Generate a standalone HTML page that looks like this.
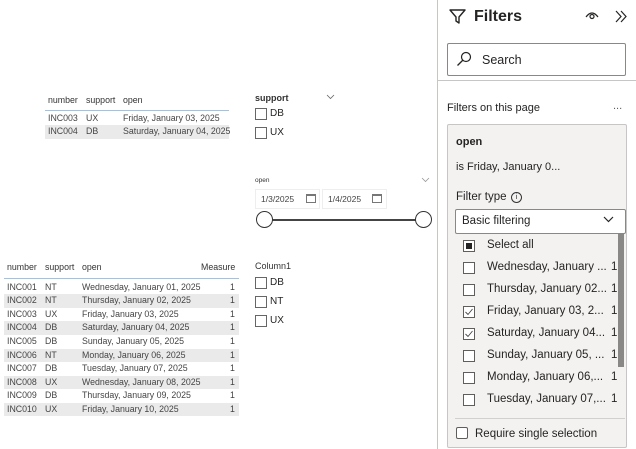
<!DOCTYPE html>
<html><head><style>
body{margin:0;width:636px;height:449px;overflow:hidden;background:#fff;font-family:"Segoe UI","Liberation Sans",sans-serif;color:#252423;position:relative}
.a{position:absolute;white-space:nowrap}
.t{font-size:9px;color:#333}
.cb{position:absolute;width:10px;height:10px;border:1px solid #666;background:#fff}
.cb2{position:absolute;width:10px;height:10px;border:1px solid #605e5c;background:#fff}
.row{position:absolute;height:13.6px;font-size:8.8px;color:#444;line-height:13.6px}
.g{background:#eaeaea}
</style></head><body>
<!-- table 1 -->
<div class="a t" style="left:48px;top:95px;font-size:8.8px">number</div>
<div class="a t" style="left:86px;top:95px;font-size:8.8px">support</div>
<div class="a t" style="left:123px;top:95px;font-size:8.8px">open</div>
<div class="a" style="left:45px;top:110px;width:184px;height:1px;background:#9cc3ec"></div>
<div class="row" style="left:45px;top:112px;width:184px"><span class="a" style="left:3px">INC003</span><span class="a" style="left:41px">UX</span><span class="a" style="left:78px">Friday, January 03, 2025</span></div>
<div class="row g" style="left:45px;top:125px;width:184px"><span class="a" style="left:3px">INC004</span><span class="a" style="left:41px">DB</span><span class="a" style="left:78px">Saturday, January 04, 2025</span></div>
<!-- support slicer -->
<div class="a" style="left:255px;top:93px;font-size:9px;font-weight:bold;color:#333">support</div>
<svg class="a" style="left:326px;top:94px" width="9" height="6"><path d="M1 1 L4.5 4.5 L8 1" fill="none" stroke="#666" stroke-width="0.8"/></svg>
<div class="cb" style="left:255px;top:108px"></div><div class="a" style="left:270px;top:108px;font-size:10px">DB</div>
<div class="cb" style="left:255px;top:127px"></div><div class="a" style="left:270px;top:127px;font-size:10px">UX</div>
<!-- open slicer -->
<div class="a" style="left:255px;top:177px;font-size:6.5px;color:#333">open</div>
<svg class="a" style="left:421px;top:177px" width="9" height="6"><path d="M1 1 L4.5 4.5 L8 1" fill="none" stroke="#999" stroke-width="0.8"/></svg>
<div class="a" style="left:255px;top:189px;width:63px;height:18px;border:1px solid #eee;font-size:8.5px;line-height:18px;color:#444"><span style="margin-left:5px">1/3/2025</span></div>
<div class="a" style="left:322px;top:189px;width:63px;height:18px;border:1px solid #eee;font-size:8.5px;line-height:18px;color:#444"><span style="margin-left:5px">1/4/2025</span></div>
<div class="a" style="left:306px;top:194px;width:8px;height:6px;border:1px solid #777;border-top-width:2px"></div>
<div class="a" style="left:372px;top:194px;width:8px;height:6px;border:1px solid #777;border-top-width:2px"></div>
<div class="a" style="left:264px;top:219px;width:160px;height:2px;background:#444"></div>
<div class="a" style="left:256px;top:211px;width:15px;height:15px;border:1.3px solid #333;border-radius:50%;background:#fff"></div>
<div class="a" style="left:415px;top:211px;width:15px;height:15px;border:1.3px solid #333;border-radius:50%;background:#fff"></div>
<!-- table 2 -->
<div class="a t" style="left:7px;top:262px;font-size:8.8px">number</div>
<div class="a t" style="left:45px;top:262px;font-size:8.8px">support</div>
<div class="a t" style="left:82px;top:262px;font-size:8.8px">open</div>
<div class="a t" style="left:201px;top:262px;font-size:8.8px">Measure</div>
<div class="a" style="left:4px;top:278px;width:235px;height:1px;background:#9cc3ec"></div>
<div id="t2"></div>
<!-- Column1 -->
<div class="a" style="left:255px;top:261px;font-size:9px;color:#333">Column1</div>
<div class="cb" style="left:255px;top:277px"></div><div class="a" style="left:270px;top:277px;font-size:10px">DB</div>
<div class="cb" style="left:255px;top:296px"></div><div class="a" style="left:270px;top:296px;font-size:10px">NT</div>
<div class="cb" style="left:255px;top:315px"></div><div class="a" style="left:270px;top:315px;font-size:10px">UX</div>
<!-- pane -->
<div class="a" style="left:437px;top:0;width:1px;height:449px;background:#c8c6c4"></div>
<div class="a" style="left:438px;top:80px;width:198px;height:1px;background:#c8c6c4"></div>
<svg class="a" style="left:449px;top:9px" width="17" height="15"><path d="M1 1 H16 L10 8 V14 L7 12 V8 Z" fill="none" stroke="#252423" stroke-width="1.4" stroke-linejoin="round"/></svg>
<div class="a" style="left:474px;top:8px;font-size:16px;font-weight:bold;color:#252423">Filters</div>
<svg class="a" style="left:585px;top:10px" width="14" height="10"><path d="M1 7 Q7 -1 13 7" fill="none" stroke="#252423" stroke-width="1.2"/><circle cx="7" cy="6.5" r="2" fill="none" stroke="#252423" stroke-width="1.2"/></svg>
<svg class="a" style="left:614px;top:10px" width="14" height="13"><path d="M2 1 L7 6.5 L2 12 M7 1 L12 6.5 L7 12" fill="none" stroke="#252423" stroke-width="1.2"/></svg>
<div class="a" style="left:447px;top:43px;width:177px;height:31px;border:1px solid #8a8886;border-radius:2px;background:#fff"></div>
<svg class="a" style="left:456px;top:51px" width="16" height="16"><circle cx="10" cy="6" r="4.5" fill="none" stroke="#252423" stroke-width="1.2"/><path d="M7 9 L1.5 14.5" stroke="#252423" stroke-width="1.3"/></svg>
<div class="a" style="left:482px;top:53px;font-size:12.5px;color:#252423">Search</div>
<div class="a" style="left:447px;top:102px;font-size:11px;color:#252423">Filters on this page</div>
<div class="a" style="left:613px;top:100px;font-size:11px;color:#605e5c">...</div>
<div class="a" style="left:447px;top:124px;width:178px;height:322px;border:1px solid #c8c6c4;border-radius:2px;background:#f3f2f1"></div>
<div class="a" style="left:456px;top:136px;font-size:11px;font-weight:bold">open</div>
<div class="a" style="left:456px;top:161px;font-size:11px;color:#252423">is Friday, January 0...</div>
<div class="a" style="left:456px;top:191px;font-size:11.5px">Filter type</div>
<div class="a" style="left:511px;top:192px;width:9px;height:9px;border:1px solid #333;border-radius:50%;font-size:7px;text-align:center;line-height:9px">i</div>
<div class="a" style="left:455px;top:209px;width:169px;height:23px;border:1px solid #8a8886;background:#fff;border-radius:2px"></div>
<div class="a" style="left:462px;top:215px;font-size:11.5px">Basic filtering</div>
<svg class="a" style="left:603px;top:216px" width="11" height="7"><path d="M1 1 L5.5 5.5 L10 1" fill="none" stroke="#252423" stroke-width="1.2"/></svg>
<div class="a" style="left:618px;top:233px;width:6px;height:134px;background:#8a8886"></div>
<div id="lst"></div>
<div class="a" style="left:455px;top:418px;width:170px;height:1px;background:#d2d0ce"></div>
<div class="cb2" style="left:456px;top:427px;border-radius:2px"></div>
<div class="a" style="left:475px;top:428px;font-size:11.5px">Require single selection</div>
<script>
var d=[["INC001","NT","Wednesday, January 01, 2025"],["INC002","NT","Thursday, January 02, 2025"],["INC003","UX","Friday, January 03, 2025"],["INC004","DB","Saturday, January 04, 2025"],["INC005","DB","Sunday, January 05, 2025"],["INC006","NT","Monday, January 06, 2025"],["INC007","DB","Tuesday, January 07, 2025"],["INC008","UX","Wednesday, January 08, 2025"],["INC009","DB","Thursday, January 09, 2025"],["INC010","UX","Friday, January 10, 2025"]];
var h="";d.forEach(function(r,i){h+='<div class="row'+(i%2?' g':'')+'" style="left:4px;top:'+(280.5+i*13.6)+'px;width:235px"><span class="a" style="left:3px">'+r[0]+'</span><span class="a" style="left:41px">'+r[1]+'</span><span class="a" style="left:78px">'+r[2]+'</span><span class="a" style="left:226px">1</span></div>'});
document.getElementById("t2").innerHTML=h;
var L=[["Select all",2,""],["Wednesday, January ...",0,"1"],["Thursday, January 02...",0,"1"],["Friday, January 03, 2...",1,"1"],["Saturday, January 04...",1,"1"],["Sunday, January 05, ...",0,"1"],["Monday, January 06,...",0,"1"],["Tuesday, January 07,...",0,"1"]];
h="";L.forEach(function(r,i){var y=240+i*22;h+='<div class="cb2" style="left:463px;top:'+y+'px">'+(r[1]==2?'<div style="position:absolute;left:2px;top:2px;width:6px;height:6px;background:#252423"></div>':'')+(r[1]==1?'<svg style="position:absolute;left:0;top:0" width="10" height="10"><path d="M1.5 5 L4 7.5 L8.5 2" fill="none" stroke="#444" stroke-width="0.9"/></svg>':'')+'</div><div class="a" style="left:487px;top:'+(y-1)+'px;font-size:11.5px;color:#252423">'+r[0]+'</div><div class="a" style="left:611px;top:'+(y-1)+'px;font-size:11.5px">'+r[2]+'</div>'});
document.getElementById("lst").innerHTML=h;
</script>
</body></html>
